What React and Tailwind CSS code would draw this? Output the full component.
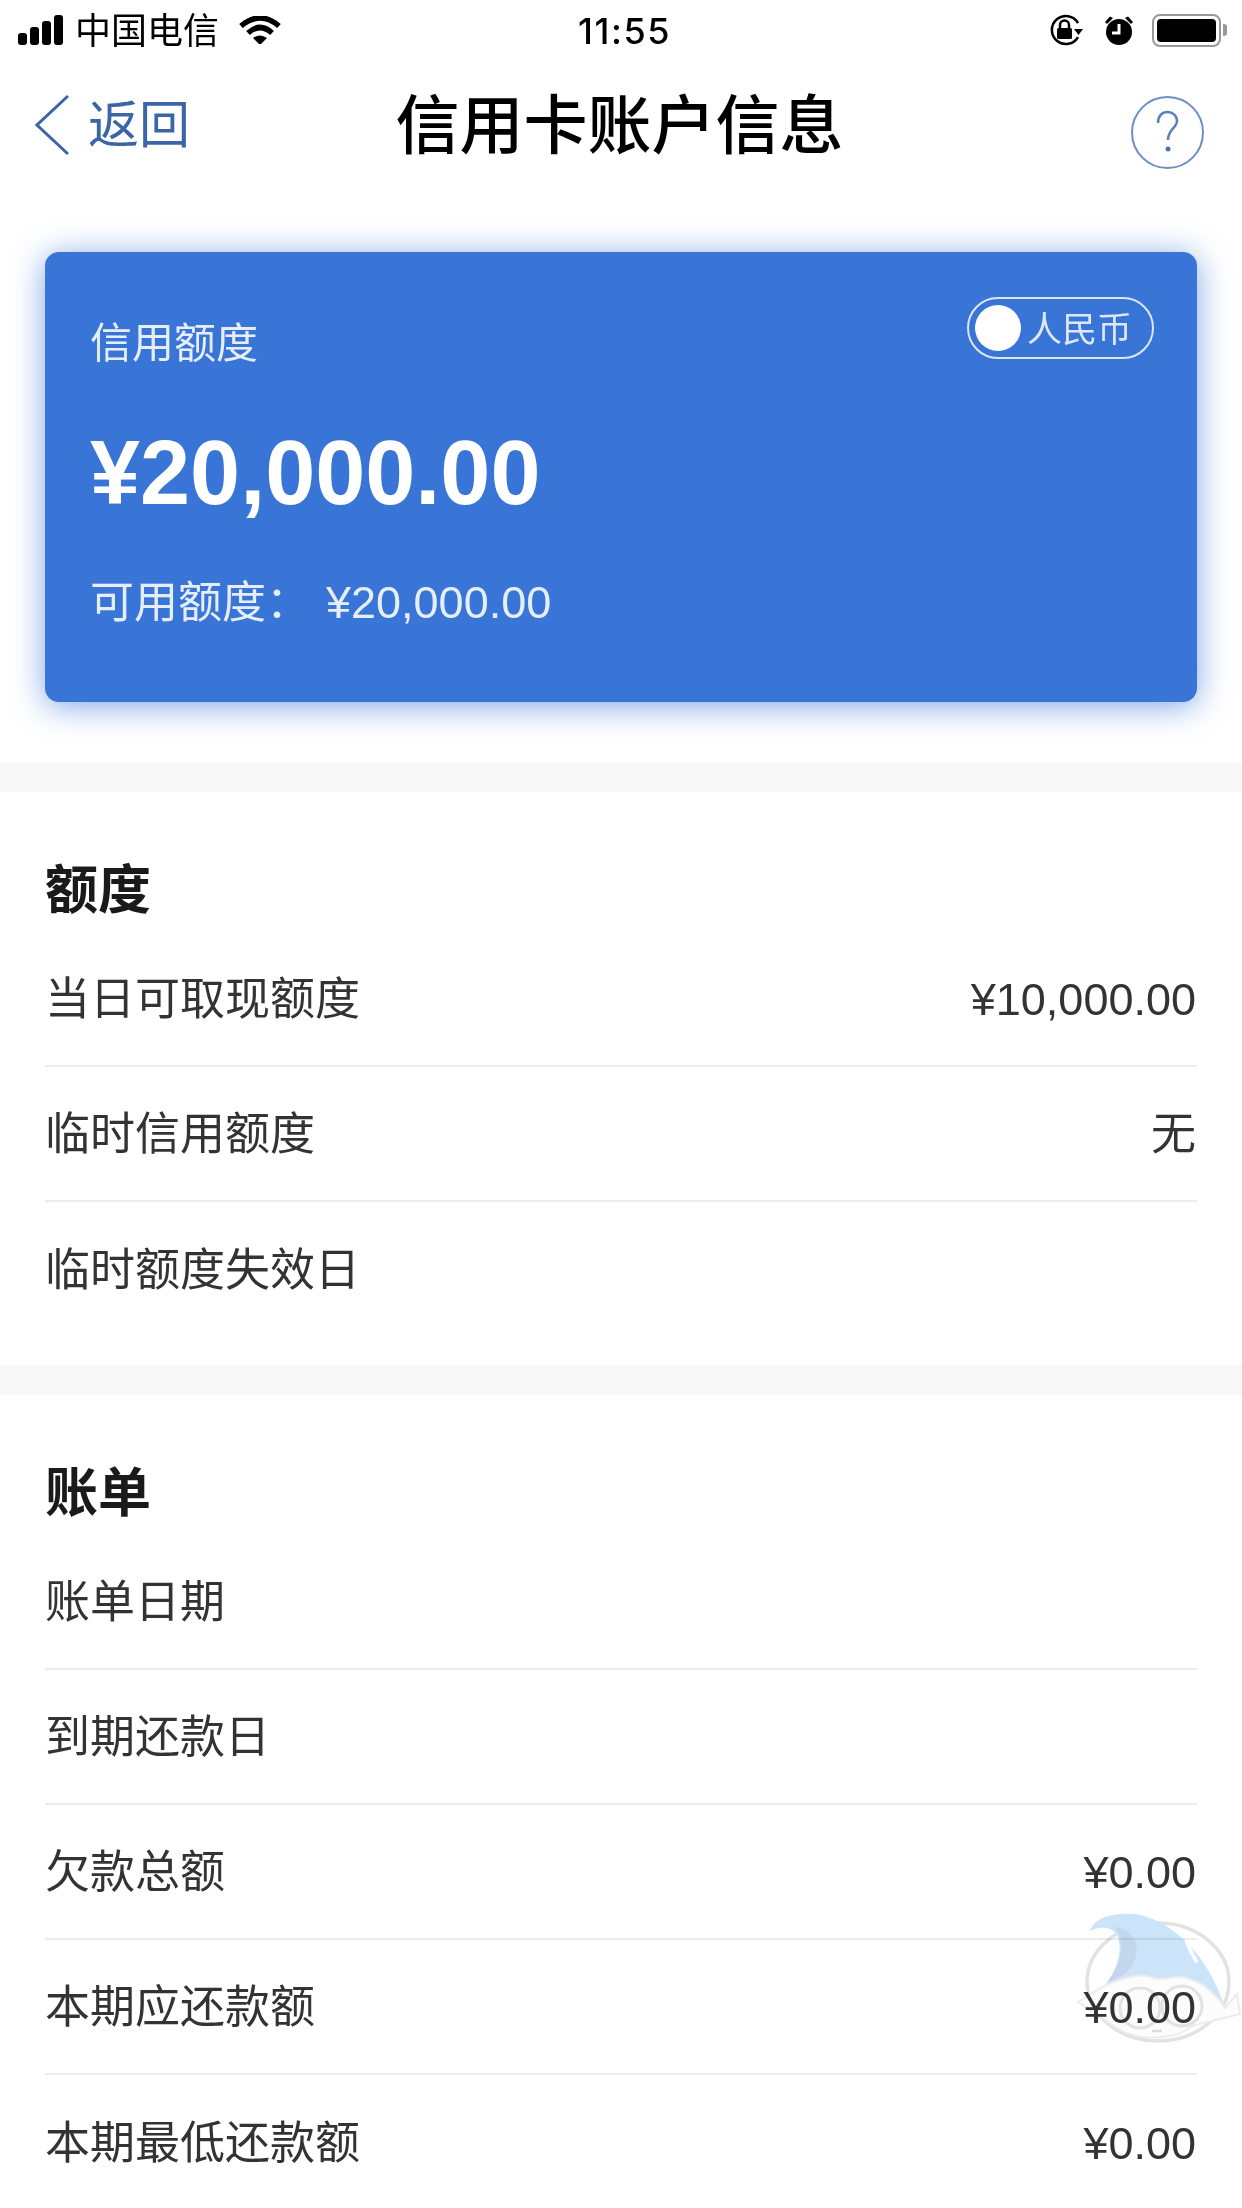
const FONT = "font-['Liberation_Sans','Noto_Sans_CJK_SC',sans-serif]";

const quota = [
  { label: "当日可取现额度", value: "¥10,000.00" },
  { label: "临时信用额度", value: "无" },
  { label: "临时额度失效日", value: "" },
];

const bill = [
  { label: "账单日期", value: "" },
  { label: "到期还款日", value: "" },
  { label: "欠款总额", value: "¥0.00" },
  { label: "本期应还款额", value: "¥0.00" },
  { label: "本期最低还款额", value: "¥0.00" },
];

const StatusBar = () => (
  <div className="flex h-[60px] items-center justify-between pl-[18px] pr-[15px] text-black">
    <div className="flex w-[400px] items-center">
      <div className="flex items-end gap-[3px]">
        <span className="h-[12px] w-[9px] rounded-[3px] bg-black" />
        <span className="h-[18px] w-[9px] rounded-[3px] bg-black" />
        <span className="h-[24px] w-[9px] rounded-[3px] bg-black" />
        <span className="h-[30px] w-[9px] rounded-[3px] bg-black" />
      </div>
      <span className="ml-[12px] mt-[3px] text-[36px] leading-[44px]">中国电信</span>
      <svg className="ml-[20px]" width="42" height="28" viewBox="0 0 42 28">
        <path d="M2 10Q21-6 40 10" fill="none" stroke="#000" strokeWidth="5.5" />
        <path d="M9 17Q21 6 33 17" fill="none" stroke="#000" strokeWidth="5.5" />
        <path d="M14 22Q21 17 28 22L21 29Z" fill="#000" />
      </svg>
    </div>
    <span className="ml-[4px] mt-[2px] font-['Inter'] text-[36px] font-medium leading-[40px] tracking-[1.5px]">11:55</span>
    <div className="flex w-[400px] items-center justify-end">
      <svg width="36" height="32" viewBox="0 0 36 32">
        <path d="M30 9A14 14 0 1 0 30 23" fill="none" stroke="#000" strokeWidth="2.5" />
        <path d="M26 15h9l-4.500 6z" fill="#000" />
        <rect x="9" y="14" width="15" height="11" rx="1.500" fill="#000" />
        <path d="M12 14v-3a4.500 4.500 0 0 1 9 0v3" fill="none" stroke="#000" strokeWidth="2.500" />
      </svg>
      <svg className="ml-[20px]" width="30" height="31" viewBox="0 0 30 31">
        <circle cx="15" cy="17" r="13" fill="#000" />
        <path d="M15 9v9h-7" fill="none" stroke="#fff" strokeWidth="3" />
        <path d="M1 7L6 1.500 9 3 3 9ZM29 7L24 1.500 21 3 27 9Z" fill="#000" />
      </svg>
      <div className="ml-[18px] flex h-[33px] w-[69px] items-center rounded-[8px] border-[2px] border-[#999] p-[3px]">
        <div className="h-full w-full rounded-[4px] bg-black" />
      </div>
      <div className="ml-[2px] h-[12px] w-[4px] rounded-r-[3px] bg-[#999]" />
    </div>
  </div>
);

const NavBar = () => (
  <div className="flex h-[130px] items-center justify-between pl-[35px] pr-[38px]">
    <div className="flex w-[300px] items-center">
      <svg width="34" height="62" viewBox="0 0 34 62">
        <path d="M33 2L2 31 33 60" fill="none" stroke="#3a66a8" strokeWidth="3" />
      </svg>
      <span className="ml-[19px] mt-[2px] text-[51px] leading-[60px] text-[#3a66a8]">返回</span>
    </div>
    <h1 className="mt-[2px] text-[64px] font-medium leading-[76px] text-black">信用卡账户信息</h1>
    <div className="flex w-[300px] justify-end">
      <svg className="mt-[14px]" width="73" height="73" viewBox="0 0 73 73">
        <circle cx="36.500" cy="36.500" r="35.500" fill="none" stroke="#6b8fc4" strokeWidth="2" />
        <path d="M27 27C27 20 31 16 36.500 16 42 16 46 20 46 25 46 32 37 33 37 44" fill="none" stroke="#5a80ba" strokeWidth="2.500" />
        <circle cx="37" cy="53" r="2.500" fill="#4d75b3" />
      </svg>
    </div>
  </div>
);

const CreditCard = () => (
  <div className="px-[45px] pb-[60px] pt-[62px]">
    <div className="relative h-[450px] rounded-[14px] bg-[#3875d7] pl-[45px] pt-[62px] text-white shadow-[0_4px_32px_rgba(56,117,215,0.65)]">
      <div className="text-[42px] leading-[60px] text-[#e6eefb]">信用额度</div>
      <div className="mt-[47px] text-[90px] font-bold leading-[104px]">¥20,000.00</div>
      <div className="mt-[48px] flex items-center text-[#e6eefb]">
        <span className="text-[44px] leading-[60px]">可用额度：</span>
        <span className="ml-[16px] text-[45px] leading-[60px]">¥20,000.00</span>
      </div>
      <div className="absolute right-[43px] top-[45px] flex h-[62px] w-[187px] items-center rounded-full border-2 border-[#dce7f8] pl-[6px]">
        <span className="h-[46px] w-[46px] rounded-full bg-white" />
        <span className="ml-[6px] mt-[3px] text-[35px] leading-[44px] text-[#dce7f8]">人民币</span>
      </div>
    </div>
  </div>
);

const Row = ({ label, value, last }) => (
  <div className={`flex h-[135px] items-center justify-between pt-[3px] text-[45px] text-[#333] ${last ? "" : "border-b-2 border-[#ececec]"}`}>
    <span>{label}</span>
    <span className="pr-[1px]">{value}</span>
  </div>
);

const Section = ({ title, rows }) => (
  <div className="border-t-[30px] border-[#f8f8f8] px-[45px] pb-[28px] pt-[69px]">
    <h2 className="h-[71px] text-[53px] font-bold leading-[60px] text-[#1a1a1a]">{title}</h2>
    {rows.map((r, i) => (
      <Row key={r.label} label={r.label} value={r.value} last={i === rows.length - 1} />
    ))}
  </div>
);

// floating assistant bubble, sits on top of the bill rows
const Mascot = () => (
  <svg
    className="absolute left-[1042px] top-[1890px] mix-blend-multiply"
    width="200"
    height="160"
    viewBox="0 0 200 160"
  >
    <ellipse cx="116" cy="92" rx="71" ry="59" fill="none" stroke="#e2e2e2" strokeWidth="3.500" />
    <path d="M48 42C50 28 72 22 92 24 125 28 165 60 183 118 170 100 160 92 150 90 135 82 125 92 112 88 98 82 85 88 62 96 80 75 82 48 70 40 62 36 52 38 48 42Z" fill="#cbe4f9" />
    <path d="M72 37C90 38 100 55 92 72 88 82 78 88 66 92 80 72 84 50 72 37Z" fill="#c4d6ee" />
    <path d="M145 52l5 12M152 67l2 4" stroke="#fff" strokeWidth="4" strokeLinecap="round" />
    <path d="M62 96C80 88 98 82 112 88 125 92 135 82 150 90 160 92 175 105 183 118L195 104 198 124 150 136C135 150 95 152 75 138L36 112Z" fill="#fcfcfc" stroke="#ececec" strokeWidth="2" />
    <circle cx="98" cy="118" r="20" fill="none" stroke="#e2e2e2" strokeWidth="3" />
    <circle cx="140" cy="116" r="20" fill="none" stroke="#e2e2e2" strokeWidth="3" />
    <path d="M110 141h10" stroke="#dcdcdc" strokeWidth="2.500" />
  </svg>
);

export default function App() {
  return (
    <div className={`relative h-[2208px] overflow-hidden bg-white ${FONT}`}>
      <StatusBar />
      <NavBar />
      <CreditCard />
      <Section title="额度" rows={quota} />
      <Section title="账单" rows={bill} />
      <Mascot />
    </div>
  );
}
